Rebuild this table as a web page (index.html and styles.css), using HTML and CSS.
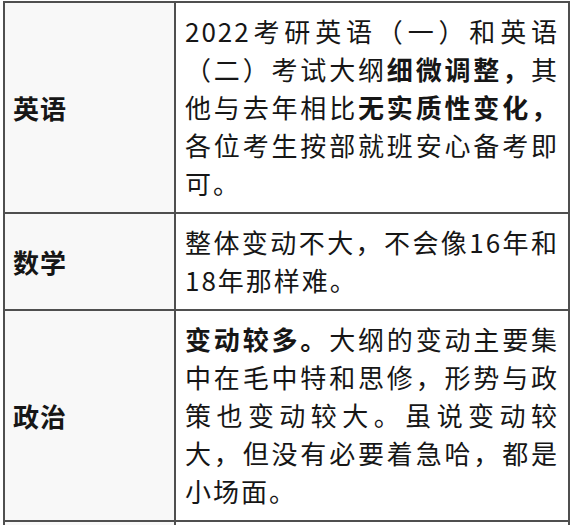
FILE: index.html
```html
<!DOCTYPE html>
<html lang="zh-CN">
<head>
<meta charset="utf-8">
<title>2022考研大纲变化</title>
<link rel="stylesheet" href="styles.css">
</head>
<body>
<div class="table">
  <div class="label">英语</div>
  <div class="desc">2022考研英语（一）和英语（二）考试大纲<b>细微调整，</b>其他与去年相比<b>无实质性变化，</b>各位考生按部就班安心备考即可。</div>
  <div class="label">数学</div>
  <div class="desc">整体变动不大，不会像16年和18年那样难。</div>
  <div class="label">政治</div>
  <div class="desc"><b>变动较多。</b>大纲的变动主要集中在毛中特和思修，形势与政策也变动较大。虽说变动较大，但没有必要着急哈，都是小场面。</div>
  <div class="label"></div>
  <div class="desc desc-empty"></div>
</div>
</body>
</html>
```
FILE: styles.css
```css
html, body {
  margin: 0;
  padding: 0;
  background: #ffffff;
}
body {
  padding: 1px 0 0 3px;
  font-family: "Noto Sans CJK SC", "Noto Sans", sans-serif;
  color: #161616;
}
.table {
  width: 567px;
  box-sizing: border-box;
  display: grid;
  grid-template-columns: 169px 392px;
  gap: 2px;
  padding: 2px;
  background: #4f4f4f;
}
.label {
  background: #f8f8f8;
  display: flex;
  align-items: center;
  padding: 0 8px;
  font-size: 26px;
  font-weight: 700;
  letter-spacing: 1px;
}
.desc {
  background: #ffffff;
  padding: 9px 9px 10px 9px;
  font-size: 26px;
  line-height: 38px;
  letter-spacing: 2px;
  text-align: justify;
}
.desc b {
  font-weight: 700;
}
.desc-empty {
  min-height: 60px;
}
```
